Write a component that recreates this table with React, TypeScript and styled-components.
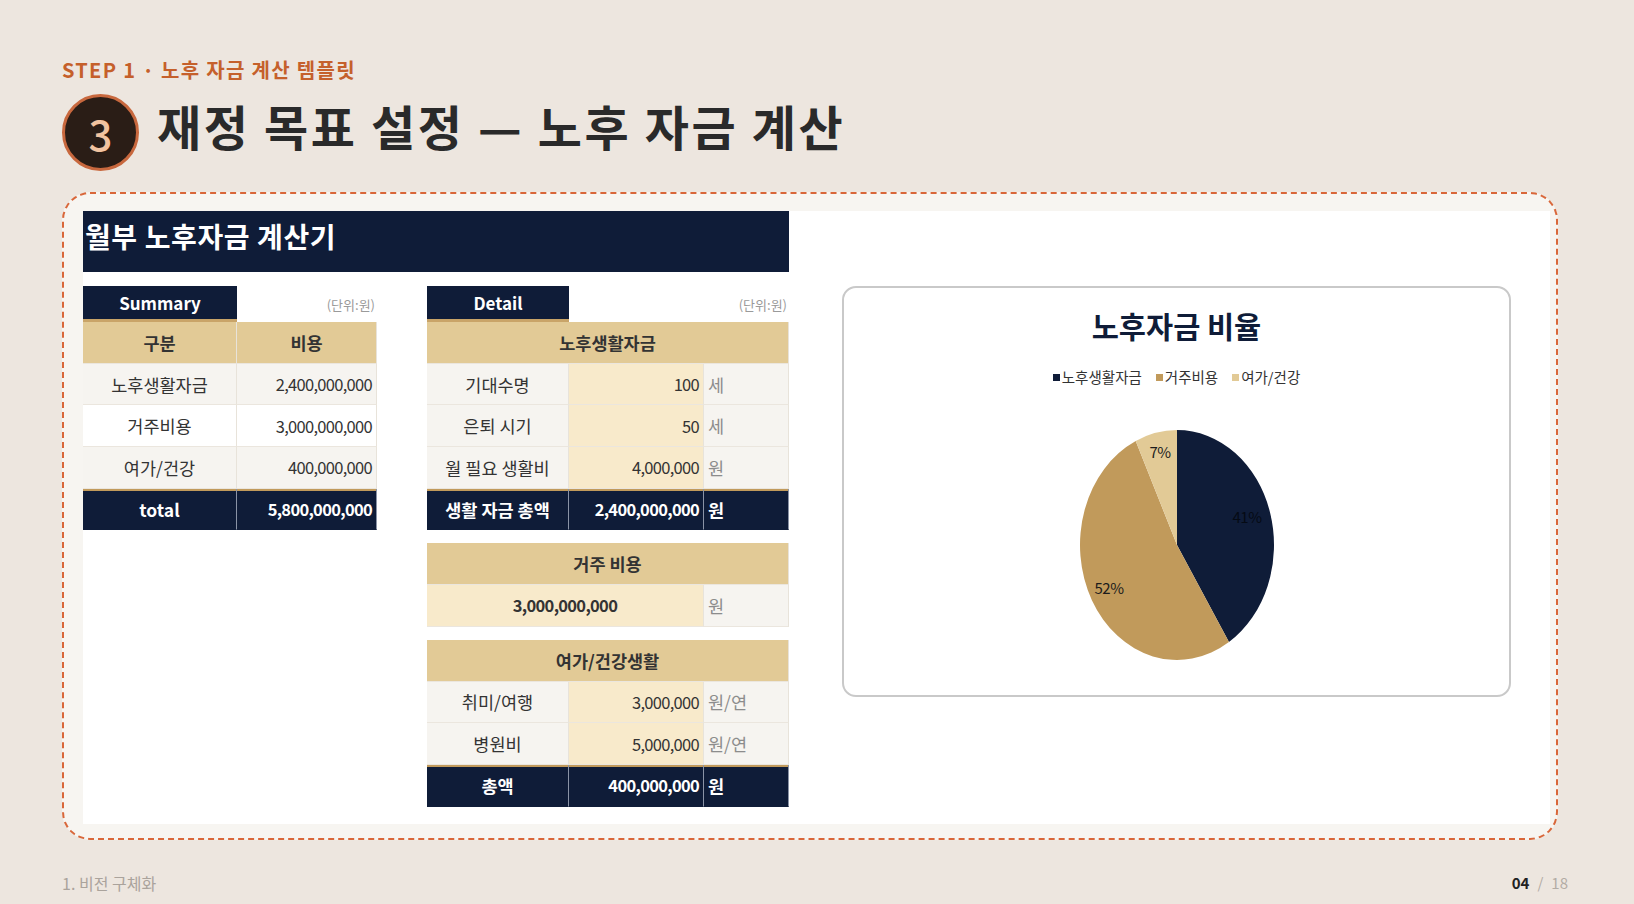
import styled, { createGlobalStyle } from "styled-components";

const GlobalStyle = createGlobalStyle`
  html, body {
    margin: 0;
    background: #ede6df;
  }
  body {
    font-family: "Noto Sans CJK KR", "Noto Sans", sans-serif;
  }
  * {
    box-sizing: border-box;
  }
`;

const NAVY = "#0f1c38";
const GOLD = "#e2ca96";
const TAN = "#c19a5b";
const CREAM = "#f8eacb";

// page frame
const Page = styled.div`
  width: 1634px;
  height: 904px;
  padding: 58px 66px 0 62px;
  display: flex;
  flex-direction: column;
`;
const StepLabel = styled.div`
  font-size: 20px;
  line-height: 24px;
  font-weight: 700;
  letter-spacing: 1.3px;
  color: #c5602b;
`;
const TitleRow = styled.div`
  display: flex;
  align-items: center;
  gap: 18px;
  margin-top: 12px;
`;
const NumberBadge = styled.div`
  width: 77px;
  height: 77px;
  border-radius: 50%;
  background: #2a1d16;
  border: 3px solid #c8683e;
  color: #f2c3a0;
  font-size: 42px;
  font-weight: 500;
  display: flex;
  align-items: center;
  justify-content: center;
`;
const Title = styled.h1`
  margin: 0 0 16px;
  font-size: 48px;
  line-height: 58px;
  font-weight: 700;
  letter-spacing: 2.6px;
  color: #2a2a2a;
`;
const Card = styled.div`
  margin-top: 21px;
  margin-right: 10px;
  height: 648px;
  border: 2px dashed #d9673a;
  border-radius: 28px;
  background: #f7f5f1;
  padding: 17px 6px 14px 19px;
`;
const Sheet = styled.div`
  height: 100%;
  background: #fff;
  display: flex;
  align-items: flex-start;
`;
const Footer = styled.div`
  margin-top: 33px;
  display: flex;
  justify-content: space-between;
  font-size: 16px;
  line-height: 20px;
  color: #aaa39c;
`;
const PageNum = styled.div`
  font-size: 15px;
  color: #b3aca5;
  b {
    color: #222;
    font-weight: 700;
  }
  span {
    margin: 0 8px;
  }
`;

// calculator
const LeftPane = styled.div`
  width: 706px;
`;
const HeaderBar = styled.div`
  height: 61px;
  background: ${NAVY};
  color: #fff;
  font-size: 28px;
  font-weight: 700;
  letter-spacing: 0.6px;
  line-height: 34px;
  padding: 8px 0 0 2px;
`;
const TablesRow = styled.div`
  display: flex;
  gap: 50px;
  margin-top: 14px;
  align-items: flex-start;
`;
const Column = styled.div<{ $w: number }>`
  width: ${(p) => p.$w}px;
  display: flex;
  flex-direction: column;
  gap: 13px;
`;
const TabRow = styled.div`
  display: flex;
  justify-content: space-between;
  align-items: center;
  height: 36px;
`;
const Tab = styled.div<{ $w: number }>`
  width: ${(p) => p.$w}px;
  height: 36px;
  background: ${NAVY};
  color: #fff;
  font-size: 17px;
  font-weight: 700;
  display: flex;
  align-items: center;
  justify-content: center;
  border-bottom: 3px solid #c9a468;
`;
const UnitNote = styled.span`
  font-size: 13px;
  color: #9a9a9a;
  padding-right: 2px;
`;
const Grid = styled.div<{ $cols: string }>`
  display: grid;
  grid-template-columns: ${(p) => p.$cols};
`;

type Tone = "head" | "label" | "white" | "value" | "unit" | "total";
const toneBg: Record<Tone, string> = {
  head: GOLD,
  label: "#f6f4f0",
  white: "#ffffff",
  value: CREAM,
  unit: "#f6f4f0",
  total: NAVY,
};
const Cell = styled.div<{
  $tone: Tone;
  $align?: "left" | "center" | "right";
  $span?: number;
  $bold?: boolean;
  $num?: boolean;
}>`
  height: 41.7px;
  grid-column: span ${(p) => p.$span ?? 1};
  display: flex;
  align-items: center;
  justify-content: ${(p) =>
    p.$align === "right" ? "flex-end" : p.$align === "left" ? "flex-start" : "center"};
  padding: ${(p) => (p.$align === "right" ? "0 4px 0 0" : p.$align === "left" ? "0 0 0 4px" : "0")};
  background: ${(p) => toneBg[p.$tone]};
  color: ${(p) => (p.$tone === "total" ? "#fff" : p.$tone === "unit" ? "#8c8c8c" : "#333")};
  font-size: ${(p) => (p.$num ? "16.5px" : "17.5px")};
  font-weight: ${(p) => (p.$bold || p.$tone === "head" || p.$tone === "total" ? 700 : 400)};
  letter-spacing: ${(p) => (p.$num ? "-0.7px" : "0")};
  white-space: nowrap;
  border-right: 1px solid ${(p) => (p.$tone === "total" ? "#8a93a6" : "#e8e3da")};
  border-bottom: 1px solid ${(p) => (p.$tone === "total" ? NAVY : "#ebe6de")};
  box-shadow: ${(p) => (p.$tone === "total" ? `inset 0 2px 0 ${TAN}` : "none")};
`;

// chart
const ChartPane = styled.div`
  margin: 75px 0 0 53px;
  width: 669px;
  height: 411px;
  border: 2px solid #c9c9c9;
  border-radius: 14px;
  display: flex;
  flex-direction: column;
  align-items: center;
  padding-top: 17px;
`;
const ChartTitle = styled.div`
  font-size: 29.5px;
  font-weight: 700;
  line-height: 40px;
  color: ${NAVY};
`;
const Legend = styled.div`
  display: flex;
  gap: 14px;
  margin-top: 22px;
  font-size: 14.5px;
  line-height: 20px;
  color: #333;
`;
const LegendItem = styled.span`
  display: flex;
  align-items: center;
  gap: 2px;
`;
const Swatch = styled.i<{ $color: string }>`
  width: 7px;
  height: 7px;
  background: ${(p) => p.$color};
`;
const PieSvg = styled.svg`
  margin-top: 40px;
  display: block;
`;

const slices = [
  { name: "노후생활자금", value: 0.41, color: NAVY },
  { name: "거주비용", value: 0.52, color: TAN },
  { name: "여가/건강", value: 0.07, color: GOLD },
];
const pieLabels = [
  { text: "41%", dx: 70, dy: -27, color: "#050a14" },
  { text: "52%", dx: -68, dy: 44, color: "#1c1c1c" },
  { text: "7%", dx: -17, dy: -92, color: "#1c1c1c" },
];

function Pie() {
  const cx = 100;
  const cy = 118;
  const rx = 97;
  const ry = 115;
  const pt = (t: number) => {
    const a = t * Math.PI * 2;
    return `${cx + rx * Math.sin(a)} ${cy - ry * Math.cos(a)}`;
  };
  let start = 0;
  return (
    <PieSvg width="200" height="236" viewBox="0 0 200 236">
      {slices.map((s) => {
        const end = start + s.value;
        const d = `M ${cx} ${cy} L ${pt(start)} A ${rx} ${ry} 0 ${s.value > 0.5 ? 1 : 0} 1 ${pt(end)} Z`;
        start = end;
        return <path key={s.name} d={d} fill={s.color} />;
      })}
      {pieLabels.map((l) => (
        <text
          key={l.text}
          x={cx + l.dx}
          y={cy + l.dy + 5}
          textAnchor="middle"
          fontSize="15"
          letterSpacing="-0.5"
          fill={l.color}
          fontFamily="'Noto Sans CJK KR', sans-serif"
        >
          {l.text}
        </text>
      ))}
    </PieSvg>
  );
}

const summaryRows = [
  { label: "노후생활자금", value: "2,400,000,000", tone: "label" as Tone },
  { label: "거주비용", value: "3,000,000,000", tone: "white" as Tone },
  { label: "여가/건강", value: "400,000,000", tone: "label" as Tone },
];
const lifeRows = [
  { label: "기대수명", value: "100", unit: "세" },
  { label: "은퇴 시기", value: "50", unit: "세" },
  { label: "월 필요 생활비", value: "4,000,000", unit: "원" },
];
const leisureRows = [
  { label: "취미/여행", value: "3,000,000", unit: "원/연" },
  { label: "병원비", value: "5,000,000", unit: "원/연" },
];
const DETAIL_COLS = "142px 135px 85px";

function App() {
  return (
    <>
      <GlobalStyle />
      <Page>
        <StepLabel>STEP 1 · 노후 자금 계산 템플릿</StepLabel>
        <TitleRow>
          <NumberBadge>3</NumberBadge>
          <Title>재정 목표 설정 — 노후 자금 계산</Title>
        </TitleRow>
        <Card>
          <Sheet>
            <LeftPane>
              <HeaderBar>월부 노후자금 계산기</HeaderBar>
              <TablesRow>
                <Column $w={294}>
                  <div>
                    <TabRow>
                      <Tab $w={154}>Summary</Tab>
                      <UnitNote>(단위:원)</UnitNote>
                    </TabRow>
                    <Grid $cols="154px 140px">
                      <Cell $tone="head">구분</Cell>
                      <Cell $tone="head">비용</Cell>
                      {summaryRows.map((r) => (
                        <>
                          <Cell key={r.label} $tone={r.tone}>
                            {r.label}
                          </Cell>
                          <Cell $tone={r.tone} $align="right" $num>
                            {r.value}
                          </Cell>
                        </>
                      ))}
                      <Cell $tone="total">total</Cell>
                      <Cell $tone="total" $align="right" $num>
                        5,800,000,000
                      </Cell>
                    </Grid>
                  </div>
                </Column>
                <Column $w={362}>
                  <div>
                    <TabRow>
                      <Tab $w={142}>Detail</Tab>
                      <UnitNote>(단위:원)</UnitNote>
                    </TabRow>
                    <Grid $cols={DETAIL_COLS}>
                      <Cell $tone="head" $span={3}>
                        노후생활자금
                      </Cell>
                      {lifeRows.map((r) => (
                        <>
                          <Cell key={r.label} $tone="label">
                            {r.label}
                          </Cell>
                          <Cell $tone="value" $align="right" $num>
                            {r.value}
                          </Cell>
                          <Cell $tone="unit" $align="left">
                            {r.unit}
                          </Cell>
                        </>
                      ))}
                      <Cell $tone="total">생활 자금 총액</Cell>
                      <Cell $tone="total" $align="right" $num>
                        2,400,000,000
                      </Cell>
                      <Cell $tone="total" $align="left">
                        원
                      </Cell>
                    </Grid>
                  </div>
                  <Grid $cols={DETAIL_COLS}>
                    <Cell $tone="head" $span={3}>
                      거주 비용
                    </Cell>
                    <Cell $tone="value" $span={2} $bold $num>
                      3,000,000,000
                    </Cell>
                    <Cell $tone="unit" $align="left">
                      원
                    </Cell>
                  </Grid>
                  <Grid $cols={DETAIL_COLS}>
                    <Cell $tone="head" $span={3}>
                      여가/건강생활
                    </Cell>
                    {leisureRows.map((r) => (
                      <>
                        <Cell key={r.label} $tone="label">
                          {r.label}
                        </Cell>
                        <Cell $tone="value" $align="right" $num>
                          {r.value}
                        </Cell>
                        <Cell $tone="unit" $align="left">
                          {r.unit}
                        </Cell>
                      </>
                    ))}
                    <Cell $tone="total">총액</Cell>
                    <Cell $tone="total" $align="right" $num>
                      400,000,000
                    </Cell>
                    <Cell $tone="total" $align="left">
                      원
                    </Cell>
                  </Grid>
                </Column>
              </TablesRow>
            </LeftPane>
            <ChartPane>
              <ChartTitle>노후자금 비율</ChartTitle>
              <Legend>
                {slices.map((s) => (
                  <LegendItem key={s.name}>
                    <Swatch $color={s.color} />
                    {s.name}
                  </LegendItem>
                ))}
              </Legend>
              <Pie />
            </ChartPane>
          </Sheet>
        </Card>
        <Footer>
          <span>1. 비전 구체화</span>
          <PageNum>
            <b>04</b>
            <span>/</span>18
          </PageNum>
        </Footer>
      </Page>
    </>
  );
}

export default App;
